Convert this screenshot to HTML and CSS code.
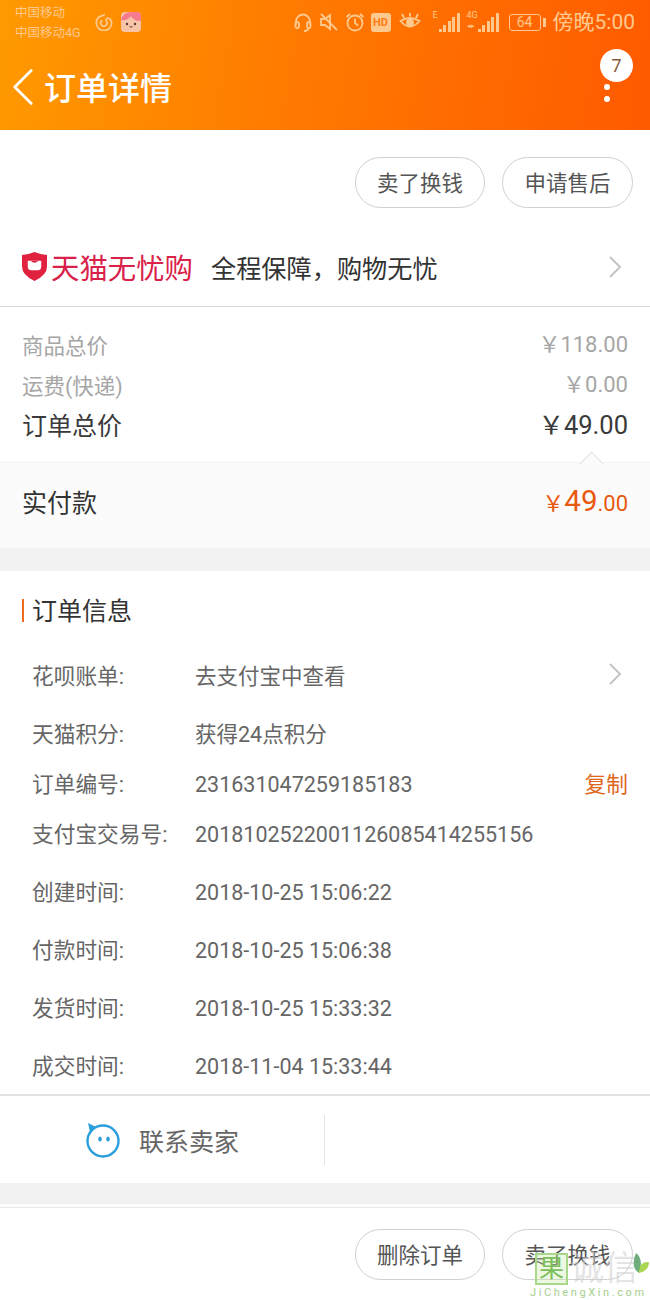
FILE: index.html
```html
<!DOCTYPE html>
<html lang="zh-CN">
<head>
    <meta charset="UTF-8">
    <meta name="viewport" content="width=device-width, initial-scale=1.0">
    <title>订单详情</title>
    <link rel="stylesheet" href="styles.css">
</head>
<body>
    <header class="top">
        <div class="status">
            <div class="carriers"><span>中国移动</span><span>中国移动4G</span></div>
            <svg class="st-app" viewBox="0 0 20 20" fill="none" stroke="currentColor" stroke-width="2"><path d="M11 1.500 L8.500 3 C4 4 1.500 7.500 1.500 11 A8.500 8.500 0 0 0 18.500 11 C18.500 7.500 15.500 5.500 13 5.500"/><path d="M12 6 L13 9.500 A3.500 3.500 0 1 1 8 8"/></svg>
            <svg class="st-pig" viewBox="0 0 20 20"><rect width="20" height="20" rx="4" fill="#f8c4a8"/><path d="M0 8 Q2 0 10 0 H16 Q20 0 20 4 V9 Q12 9 10 4 Q7 9 0 8Z" fill="#f77b8e"/><circle cx="6" cy="12" r="1.2" fill="#5a3a30"/><circle cx="14" cy="12" r="1.2" fill="#5a3a30"/><path d="M8.500 14.500 Q10 16 11.500 14.500" stroke="#5a3a30" fill="none"/></svg>
            <div class="status-right">
                <svg class="st-ico" viewBox="0 0 20 20" fill="none" stroke="currentColor" stroke-width="1.8"><path d="M3 13 V9.500 A7 7 0 0 1 17 9.500 V13"/><rect x="2.500" y="10" width="3.500" height="6" rx="1.500"/><rect x="14" y="10" width="3.500" height="6" rx="1.500"/><path d="M16 16 Q15 19 11 19"/></svg>
                <svg class="st-ico" viewBox="0 0 20 20" fill="none" stroke="currentColor" stroke-width="1.8"><path d="M2 7 H6 L11 3 V17 L6 13 H2Z"/><path d="M2 2 L18 18"/></svg>
                <svg class="st-ico" viewBox="0 0 20 20" fill="none" stroke="currentColor" stroke-width="1.8"><circle cx="10" cy="11" r="7.500"/><path d="M10 6.500 V11 L13 13.500"/><path d="M1.500 5 L5 2 M18.500 5 L15 2"/></svg>
                <span class="st-hd">HD</span>
                <svg class="st-eye" viewBox="0 0 22 20" fill="none" stroke="currentColor" stroke-width="1.8"><path d="M1.500 9 Q11 3 20.500 9 Q11 20 1.500 9Z"/><circle cx="11" cy="10.500" r="3" fill="currentColor"/><path d="M3 2 L5 6 M11 1 V4.500 M19 2 L17 6"/></svg>
                <div class="signal sig-e"><small>E</small><i class="b1"></i><i class="b2"></i><i class="b3"></i><i class="b4"></i><i class="b5"></i></div>
                <div class="signal sig-4g"><small>4G</small><small class="arrows">◂▸</small><i class="b1"></i><i class="b2"></i><i class="b3"></i><i class="b4"></i><i class="b5"></i></div>
                <div class="battery"><span>64</span></div>
                <span class="st-time">傍晚5:00</span>
            </div>
        </div>
        <div class="nav">
            <svg class="back" viewBox="0 0 24 40" fill="none" stroke="#fff" stroke-width="3" stroke-linecap="round" stroke-linejoin="round"><path d="M21 2 L3 20 L21 38"/></svg>
            <h1>订单详情</h1>
            <div class="more">
                <span class="badge">7</span>
                <i class="dot"></i>
                <i class="dot"></i>
            </div>
        </div>
    </header>

    <div class="actions actions-top">
        <button class="pill">卖了换钱</button>
        <button class="pill">申请售后</button>
    </div>

    <div class="promise">
        <svg class="shield" viewBox="0 0 26 30"><path d="M13 0 Q20 3 26 3 V15 Q26 24 13 30 Q0 24 0 15 V3 Q6 3 13 0Z" fill="#e0213f"/><path d="M6 9 H20 V15 Q20 19 16 19 H10 Q6 19 6 15Z" fill="#fff"/><path d="M9 9 Q13 13 17 9Z" fill="#e0213f"/></svg>
        <span class="promise-name">天猫无忧购</span>
        <span class="promise-text">全程保障，购物无忧</span>
        <svg class="chevron" viewBox="0 0 14 22" fill="none" stroke="#c4c4c4" stroke-width="2"><path d="M2 1 L12 11 L2 21"/></svg>
    </div>

    <section class="prices">
        <div class="price-row muted"><span>商品总价</span><span class="amount">￥118.00</span></div>
        <div class="price-row muted"><span>运费(快递)</span><span class="amount">￥0.00</span></div>
        <div class="price-row total"><span>订单总价</span><span class="amount">￥49.00</span></div>
    </section>

    <section class="paid">
        <span class="caret"></span>
        <span class="paid-label">实付款</span>
        <span class="paid-amount"><small>￥</small><b>49</b><small>.00</small></span>
    </section>

    <div class="gap"></div>

    <section class="info">
        <h2>订单信息</h2>
        <div class="info-row"><span class="key">花呗账单:</span><span class="val">去支付宝中查看</span><svg class="chevron" viewBox="0 0 14 22" fill="none" stroke="#c4c4c4" stroke-width="2"><path d="M2 1 L12 11 L2 21"/></svg></div>
        <div class="info-row spaced"><span class="key">天猫积分:</span><span class="val">获得24点积分</span></div>
        <div class="info-row"><span class="key">订单编号:</span><span class="val num">231631047259185183</span><a class="copy">复制</a></div>
        <div class="info-row"><span class="key">支付宝交易号:</span><span class="val num">2018102522001126085414255156</span></div>
        <div class="info-row spaced"><span class="key">创建时间:</span><span class="val num">2018-10-25 15:06:22</span></div>
        <div class="info-row spaced"><span class="key">付款时间:</span><span class="val num">2018-10-25 15:06:38</span></div>
        <div class="info-row spaced"><span class="key">发货时间:</span><span class="val num">2018-10-25 15:33:32</span></div>
        <div class="info-row spaced"><span class="key">成交时间:</span><span class="val num">2018-11-04 15:33:44</span></div>
    </section>

    <section class="contact">
        <div class="contact-cell">
            <svg class="face" viewBox="0 0 36 36" fill="none"><circle cx="18" cy="19" r="15.500" stroke="#2a9fdc" stroke-width="2.400"/><path d="M3 1 L11 5 L5 10Z" fill="#2a9fdc"/><ellipse cx="15" cy="17" rx="1.800" ry="2.500" fill="#2a9fdc"/><ellipse cx="23" cy="17" rx="1.800" ry="2.500" fill="#2a9fdc"/></svg>
            <span>联系卖家</span>
        </div>
        <div class="contact-cell"></div>
    </section>

    <div class="gap gap-low"></div>

    <div class="actions actions-bottom">
        <button class="pill">删除订单</button>
        <button class="pill">卖了换钱</button>
    </div>

    <div class="watermark">
        <span class="wm-box">果</span>
        <span class="wm-name">诚信</span>
        <span class="wm-url">JiChengXin.com</span>
        <svg class="wm-leaf" viewBox="0 0 20 24"><path d="M6 0 Q14 6 9 20 Q0 14 6 0Z" fill="#6fae7c"/><path d="M9 18 Q10 8 19 9 Q19 18 9 20Z" fill="#a9d651"/></svg>
    </div>
</body>
</html>
```

FILE: styles.css
```css
* {
    box-sizing: border-box;
}
body {
    margin: 0;
    height: 1300px;
    overflow: hidden;
    position: relative;
    background-color: #fff;
    color: #333;
    font-family: Roboto, "Noto Sans CJK SC", sans-serif;
}

/* top bar */
.top {
    height: 130px;
    background: linear-gradient(100deg, #ff9a00 0%, #ff7a00 45%, #ff5a00 100%);
    color: #ffc98e;
}
.status {
    height: 44px;
    display: flex;
    align-items: center;
    padding: 0 15px;
}
.carriers {
    display: flex;
    flex-direction: column;
    padding-top: 2px;
    font-size: 12.5px;
    line-height: 20px;
    width: 80px;
}
.st-app {
    width: 18px;
    height: 18px;
    margin-right: 8px;
}
.st-pig {
    width: 20px;
    height: 20px;
}
.status-right {
    margin-left: auto;
    display: flex;
    align-items: center;
    gap: 6px;
}
.st-ico {
    width: 20px;
    height: 20px;
}
.st-hd {
    background-color: #ffc98e;
    color: #ff7a10;
    font-size: 11px;
    font-weight: 700;
    width: 20px;
    height: 19px;
    line-height: 19px;
    text-align: center;
    border-radius: 3px;
}
.st-eye {
    width: 22px;
    height: 20px;
    margin-left: 2px;
}
.signal {
    position: relative;
    height: 20px;
    display: flex;
    align-items: flex-end;
    justify-content: flex-end;
    gap: 1.5px;
}
.sig-e {
    width: 27px;
    margin-left: 6px;
}
.sig-4g {
    width: 32px;
    margin-left: 1px;
}
.signal small {
    position: absolute;
    left: 0;
    top: -2px;
    font-size: 9px;
    line-height: 10px;
}
.signal small.arrows {
    top: 9px;
    font-size: 7px;
}
.signal i {
    width: 3px;
    background-color: currentColor;
}
.b1 { height: 3px; }
.b2 { height: 7px; }
.b3 { height: 11px; }
.b4 { height: 15px; }
.b5 { height: 19px; }
.battery {
    position: relative;
    width: 32px;
    height: 17px;
    margin-left: 4px;
    border: 1px solid currentColor;
    border-radius: 3px;
    font-size: 14px;
    line-height: 15px;
    text-align: center;
}
.battery::after {
    content: "";
    position: absolute;
    right: -6px;
    top: 3px;
    width: 3px;
    height: 9px;
    background-color: currentColor;
}
.st-time {
    margin-left: 6px;
    font-size: 21px;
    line-height: 24px;
}
.nav {
    height: 86px;
    display: flex;
    align-items: center;
    padding: 0 16px 0 12px;
}
.back {
    width: 22px;
    height: 38px;
}
.nav h1 {
    margin: 3px 0 0 10px;
    font-size: 32px;
    line-height: 44px;
    font-weight: 500;
    color: #fff;
}
.more {
    position: relative;
    margin-left: auto;
    margin-right: 24px;
    margin-top: 12px;
    width: 6px;
    height: 18px;
    display: flex;
    flex-direction: column;
    justify-content: space-between;
}
/* count badge lies over the menu icon */
.badge {
    position: absolute;
    left: -4px;
    top: -35px;
    width: 33px;
    height: 33px;
    border-radius: 50%;
    background-color: #fff;
    color: #8a5a3a;
    font-size: 18px;
    line-height: 33px;
    text-align: center;
}
.dot {
    width: 6px;
    height: 6px;
    border-radius: 50%;
    background-color: #fff;
}

/* buttons */
.actions {
    display: flex;
    justify-content: flex-end;
    gap: 17px;
    padding: 27px 17px 0 0;
}
.actions-top {
    height: 100px;
}
.actions-bottom {
    padding-top: 21px;
}
.pill {
    width: 130px;
    height: 51px;
    padding: 0 0 2px;
    background-color: #fff;
    border: 1px solid #d0d0d0;
    border-radius: 26px;
    color: #555;
    font-family: inherit;
    font-size: 21.5px;
}
.pill:last-child {
    width: 131px;
}

/* tmall row */
.promise {
    height: 77px;
    display: flex;
    align-items: center;
    padding: 0 28px 3px 22px;
    border-bottom: 1px solid #d9d9d9;
}
.shield {
    width: 25px;
    height: 29px;
}
.promise-name {
    margin-left: 4px;
    font-size: 28.4px;
    color: #d9214a;
}
.promise-text {
    margin-left: 18px;
    font-size: 25.2px;
    color: #333;
}
.chevron {
    width: 14px;
    height: 22px;
    margin-left: auto;
}

/* prices */
.prices {
    padding: 17px 22px 0;
    height: 155px;
}
.price-row {
    display: flex;
    justify-content: space-between;
    align-items: center;
    height: 40px;
}
.muted {
    font-size: 21.5px;
    color: #a6a6a6;
}
.total {
    font-size: 25px;
    color: #3a3a3a;
}
.amount {
    font-size: 22px;
    margin-top: -4px;
}
.total .amount {
    font-size: 25.5px;
}
.paid {
    position: relative;
    height: 86px;
    display: flex;
    justify-content: space-between;
    align-items: center;
    padding: 0 22px 10px;
    background-color: #fbfbfb;
    border-top: 1px solid #f2f2f2;
}
.caret {
    position: absolute;
    right: 50px;
    top: -8px;
    width: 17px;
    height: 17px;
    background-color: #fbfbfb;
    border-top: 1px solid #e4e4e4;
    border-left: 1px solid #e4e4e4;
    transform: rotate(45deg);
}
.paid-label {
    font-size: 25px;
}
.paid-amount {
    color: #e8590f;
    font-size: 22px;
}
.paid-amount small {
    font-size: 22px;
}
.paid-amount b {
    font-size: 29.5px;
    font-weight: 400;
}
.gap {
    height: 23px;
    background-color: #f2f2f2;
}

/* order info */
.info {
    height: 525px;
    padding: 28px 22px 0 0;
    border-bottom: 2px solid #e2e2e2;
}
.info h2 {
    margin: 0 0 27px 22px;
    height: 23px;
    padding-left: 8px;
    border-left: 2px solid #ee6a1f;
    font-size: 25px;
    font-weight: 400;
    line-height: 25px;
}
.info-row {
    display: flex;
    align-items: center;
    height: 50px;
    padding-left: 32px;
    font-size: 21.7px;
    color: #666;
}
.info-row.spaced {
    margin-top: 8px;
}
.info-row .chevron {
    margin-right: 6px;
}
.key {
    width: 163px;
    flex-shrink: 0;
}
.val {
    font-size: 21.5px;
}
.val.num {
    padding-top: 4px;
}
.copy {
    margin-left: auto;
    color: #e0661c;
}

/* contact */
.contact {
    height: 87px;
    display: flex;
    align-items: center;
}
.contact-cell {
    width: 326px;
    height: 50px;
    display: flex;
    align-items: center;
    justify-content: center;
    gap: 18px;
    font-size: 25px;
    color: #666;
}
.contact-cell:first-child {
    border-right: 1px solid #e2e2e2;
}
.face {
    width: 36px;
    height: 36px;
}
.gap-low {
    height: 25px;
    background: linear-gradient(#f2f2f2 21px, #fff 21px, #fff 24px, #e8e8e8 24px);
}

/* watermark sits over the bottom button */
.watermark {
    position: absolute;
    left: 530px;
    top: 1250px;
    width: 120px;
    height: 50px;
}
.wm-box {
    position: absolute;
    left: 5px;
    top: 3px;
    width: 33px;
    height: 32px;
    border: 2px solid #a8d88a;
    background-color: rgba(200, 235, 170, 0.35);
    color: #7cbf5a;
    font-size: 25px;
    line-height: 27px;
    text-align: center;
}
.wm-name {
    position: absolute;
    left: 40px;
    top: -1px;
    font-size: 34px;
    line-height: 38px;
    color: rgba(205, 205, 205, 0.55);
}
.wm-url {
    position: absolute;
    left: 0;
    top: 36px;
    font-size: 11px;
    line-height: 14px;
    letter-spacing: 2.6px;
    white-space: nowrap;
    color: #a6cf8e;
}
.wm-leaf {
    position: absolute;
    left: 100px;
    top: 3px;
    width: 20px;
    height: 24px;
}
```
